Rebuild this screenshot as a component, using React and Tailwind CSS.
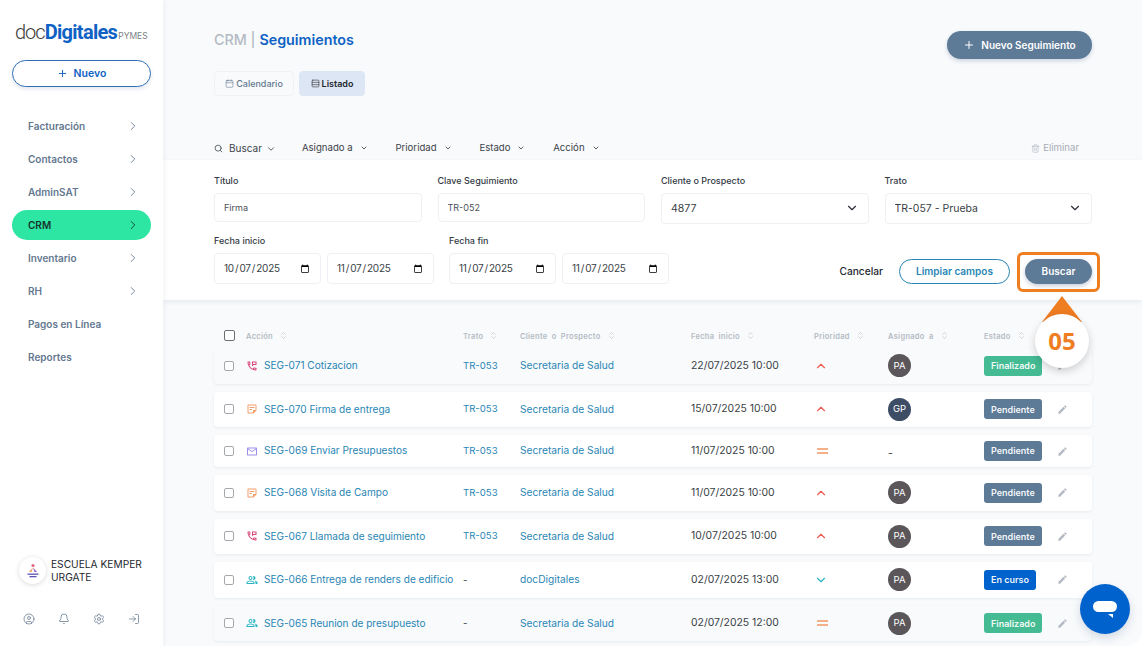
import { useState } from 'react'
import {
  Plus, ChevronRight, ChevronDown, ChevronUp, ChevronsUpDown, Search, Trash2, Calendar, Rows3,
  CircleUser, Bell, Settings, LogIn,
} from 'lucide-react'
import { MdOutlinePermPhoneMsg, MdOutlineStickyNote2, MdOutlineEmail, MdOutlinePeopleAlt, MdEdit } from 'react-icons/md'

const menu = [
  { label: 'Facturación', arrow: true },
  { label: 'Contactos', arrow: true },
  { label: 'AdminSAT', arrow: true },
  { label: 'CRM', arrow: true, active: true },
  { label: 'Inventario', arrow: true },
  { label: 'RH', arrow: true },
  { label: 'Pagos en Línea' },
  { label: 'Reportes' },
]

const filtros = ['Asignado a', 'Prioridad', 'Estado', 'Acción']

const filas = [
  { accion: 'SEG-071 Cotizacion', tipo: 'tel', trato: 'TR-053', cliente: 'Secretaria de Salud', fecha: '22/07/2025 10:00', prioridad: 'alta', persona: 'PA', estado: 'Finalizado', gris: true },
  { accion: 'SEG-070 Firma de entrega', tipo: 'nota', trato: 'TR-053', cliente: 'Secretaria de Salud', fecha: '15/07/2025 10:00', prioridad: 'alta', persona: 'GP', estado: 'Pendiente' },
  { accion: 'SEG-069 Enviar Presupuestos', tipo: 'mail', trato: 'TR-053', cliente: 'Secretaria de Salud', fecha: '11/07/2025 10:00', prioridad: 'media', persona: '-', estado: 'Pendiente' },
  { accion: 'SEG-068 Visita de Campo', tipo: 'nota', trato: 'TR-053', cliente: 'Secretaria de Salud', fecha: '11/07/2025 10:00', prioridad: 'alta', persona: 'PA', estado: 'Pendiente' },
  { accion: 'SEG-067 Llamada de seguimiento', tipo: 'tel', trato: 'TR-053', cliente: 'Secretaria de Salud', fecha: '10/07/2025 10:00', prioridad: 'alta', persona: 'PA', estado: 'Pendiente' },
  { accion: 'SEG-066 Entrega de renders de edificio', tipo: 'grupo', trato: '-', cliente: 'docDigitales', fecha: '02/07/2025 13:00', prioridad: 'baja', persona: 'PA', estado: 'En curso' },
  { accion: 'SEG-065 Reunion de presupuesto', tipo: 'grupo', trato: '-', cliente: 'Secretaria de Salud', fecha: '02/07/2025 12:00', prioridad: 'media', persona: 'PA', estado: 'Finalizado', gris: true },
]

const columnas = 'grid grid-cols-[22px_217px_57px_171px_123px_74px_96px_74px_1fr] items-center'

function IconoTipo({ tipo }) {
  if (tipo === 'tel') return <MdOutlinePermPhoneMsg className="text-[#d9467a]" size={12} />
  if (tipo === 'nota') return <MdOutlineStickyNote2 className="text-[#f2a06a]" size={12} />
  if (tipo === 'mail') return <MdOutlineEmail className="text-[#9d8de8]" size={13} />
  return <MdOutlinePeopleAlt className="text-[#2bb5c4]" size={12} />
}

function Prioridad({ nivel }) {
  if (nivel === 'alta') return <ChevronUp className="text-[#ec5a52]" size={14} strokeWidth={2} />
  if (nivel === 'baja') return <ChevronDown className="text-[#2bb5c4]" size={14} strokeWidth={2} />
  return (
    <div className="ml-[3px] flex w-[11px] flex-col gap-[2px]">
      <span className="h-[2px] bg-[#f4b088]" />
      <span className="h-[2px] bg-[#f4b088]" />
    </div>
  )
}

function Estado({ texto }) {
  const color = texto === 'Finalizado' ? 'bg-[#45bb94]' : texto === 'En curso' ? 'bg-[#0062cc]' : 'bg-[#5d7a97]'
  return (
    <span className={`flex h-[20px] w-fit items-center rounded-[3px] px-[7px] text-[9px] font-semibold text-white/95 ${color}`}>
      {texto}
    </span>
  )
}

function Encabezado({ texto }) {
  return (
    <div className="flex items-center gap-[6px] text-[7.5px] font-semibold tracking-[0.3px] text-[#b4bac3] [word-spacing:2px]">
      <span>{texto}</span>
      <ChevronsUpDown size={9} strokeWidth={1.5} className="-mt-[3px]" />
    </div>
  )
}

function Campo({ label, valor, ancho }) {
  return (
    <label className={`flex flex-col gap-[5px] ${ancho}`}>
      <span className="text-[9px] font-medium text-[#333a44] leading-[14px]">{label}</span>
      <input
        defaultValue={valor}
        className="h-[29px] w-full rounded-[4px] border border-[#eef0f3] bg-white px-[9px] text-[9px] text-[#4a5058] outline-none"
      />
    </label>
  )
}

function Opcion({ label, valor, ancho }) {
  return (
    <label className={`flex flex-col gap-[5px] ${ancho}`}>
      <span className="text-[9px] font-medium text-[#333a44] leading-[14px]">{label}</span>
      <div className="relative">
        <select
          defaultValue={valor}
          className="h-[31px] w-full appearance-none rounded-[4px] border border-[#eef0f3] bg-white px-[9px] text-[10.5px] text-[#3a3f46] outline-none"
        >
          <option>{valor}</option>
        </select>
        <ChevronDown size={14} strokeWidth={2} className="pointer-events-none absolute right-[10px] top-[8px] text-[#2b2f36]" />
      </div>
    </label>
  )
}

function CampoFecha({ valor }) {
  return (
    <input
      type="date"
      defaultValue={valor}
      className="h-[31px] w-[107px] rounded-[4px] border border-[#eef0f3] bg-white px-[8px] text-[10px] tracking-[-0.2px] text-[#3a3f46] outline-none"
    />
  )
}

function Sidebar() {
  return (
    <aside className="z-10 flex w-[163px] shrink-0 flex-col bg-white shadow-[1px_0_6px_rgba(30,50,80,0.06)]">
      <div className="mt-[20px] flex h-[24px] items-end pl-[15px] whitespace-nowrap">
        <span className="text-[20px] font-light leading-[24px] tracking-[-1px] text-[#3a3a3a] font-['Roboto',sans-serif]">doc</span>
        <span className="text-[20px] font-bold leading-[24px] tracking-[-0.7px] text-[#0f62c4] font-['Roboto',sans-serif]">Digitales</span>
        <span className="ml-[1px] mb-[2px] text-[8.5px] leading-[12px] text-[#7a7f86]">PYMES</span>
      </div>
      <button className="mx-[12px] mt-[16px] flex h-[27px] items-center justify-center gap-[6px] rounded-full border border-[#2f6fb5] bg-white text-[10.5px] font-semibold text-[#0f62c4] shadow-[0_2px_4px_rgba(30,60,110,0.12)]">
        <Plus size={11} strokeWidth={2} />
        Nuevo
      </button>
      <nav className="mt-[24px] flex flex-col gap-[3px] px-[12px]">
        {menu.map((m) => (
          <div
            key={m.label}
            className={`flex h-[30px] items-center justify-between rounded-full pl-[16px] pr-[11px] text-[10px] font-semibold ${
              m.active ? 'bg-[#2ee6a4] text-[#12342c]' : 'text-[#64788f]'
            }`}
          >
            <span>{m.label}</span>
            {m.arrow && <ChevronRight size={14} strokeWidth={1.5} />}
          </div>
        ))}
      </nav>
      <div className="mt-auto flex items-center gap-[5px] pl-[19px]">
        <div className="flex h-[27px] w-[27px] items-center justify-center rounded-full bg-white shadow-[0_1px_5px_rgba(0,0,0,0.15)]">
          <svg width="14" height="16" viewBox="0 0 14 16">
            <circle cx="7" cy="2.5" r="1.6" fill="#e5677e" />
            <path d="M7 4.5 L3 9 H5.5 Z" fill="#f29a4e" />
            <path d="M7 4.5 L11 9 H8.5 Z" fill="#8c5bd0" />
            <rect x="1.5" y="10.5" width="11" height="1.3" fill="#5a55b5" />
            <rect x="3.5" y="13" width="7" height="1.3" fill="#5a55b5" />
          </svg>
        </div>
        <div className="text-[10.2px] leading-[13px] text-[#24282e]">ESCUELA KEMPER<br />URGATE</div>
      </div>
      <div className="mb-[21px] mt-[29px] flex gap-[23px] pl-[23px] text-[#64788f]">
        <CircleUser size={12} strokeWidth={1.5} />
        <Bell size={12} strokeWidth={1.5} />
        <Settings size={12} strokeWidth={1.5} />
        <LogIn size={12} strokeWidth={1.5} />
      </div>
    </aside>
  )
}

export default function App() {
  const [vista, setVista] = useState('listado')

  return (
    <div className="flex h-[646px] w-[1142px] overflow-hidden bg-white font-['Inter',sans-serif]">
      <Sidebar />

      <main className="relative flex min-w-0 flex-1 flex-col rounded-br-[16px] bg-[#f8fafc]">
        <div className="flex items-start justify-between pl-[51px] pr-[50px] pt-[31px]">
          <h1 className="text-[14.3px] font-semibold leading-[18px]">
            <span className="font-medium text-[#b4bac3]">CRM | </span>
            <span className="text-[#0f62c4]">Seguimientos</span>
          </h1>
          <button className="flex h-[28px] w-[145px] items-center justify-center gap-[6px] rounded-full bg-[#5d7a97] text-[10px] font-semibold text-white shadow-[0_2px_4px_rgba(30,60,110,0.2)]">
            <Plus size={12} strokeWidth={2} />
            Nuevo Seguimiento
          </button>
        </div>

        <div className="-mt-[4px] flex gap-[5px] pl-[51px] pt-[16px]">
          <button
            onClick={() => setVista('calendario')}
            className={`flex h-[25px] w-[80px] items-center justify-center gap-[2px] rounded-[4px] border text-[9px] font-medium ${
              vista === 'calendario' ? 'border-[#dde6f4] bg-[#dde6f4] text-[#24282e]' : 'border-[#f0f2f5] text-[#64788f]'
            }`}
          >
            <Calendar size={9} strokeWidth={1.5} />
            Calendario
          </button>
          <button
            onClick={() => setVista('listado')}
            className={`flex h-[25px] w-[66px] items-center justify-center gap-[2px] rounded-[4px] border text-[9px] font-semibold ${
              vista === 'listado' ? 'border-[#dde6f4] bg-[#dde6f4] text-[#24282e]' : 'border-[#f0f2f5] text-[#64788f]'
            }`}
          >
            <Rows3 size={9} strokeWidth={1.5} />
            Listado
          </button>
        </div>

        <div className="mt-[40px] flex h-[24px] items-start pl-[51px] pr-[63px] pt-[5px] text-[9.6px] text-[#3c4249]">
          <div className="flex items-center">
            <Search size={9} strokeWidth={2} className="mr-[6px]" />
            <span className="mr-[4px] text-[10px]">Buscar</span>
            <ChevronDown size={10} strokeWidth={2} />
          </div>
          <div className="ml-[26px] flex gap-[27.8px]">
            {filtros.map((f) => (
              <div key={f} className="flex items-center gap-[7px]">
                <span>{f}</span>
                <ChevronDown size={8} strokeWidth={2.5} />
              </div>
            ))}
          </div>
          <div className="ml-auto flex items-center gap-[3px] text-[#a8adb5]">
            <Trash2 size={9} strokeWidth={1.5} />
            Eliminar
          </div>
        </div>

        <section className="flex h-[140px] flex-col bg-white pl-[51px] pr-[50px] pt-[14px] shadow-[0_2px_5px_rgba(30,50,80,0.08)]">
          <div className="flex gap-[16px]">
            <Campo label="Título" valor="Firma" ancho="w-[208px]" />
            <Campo label="Clave Seguimiento" valor="TR-052" ancho="w-[208px]" />
            <Opcion label="Cliente o Prospecto" valor="4877" ancho="w-[208px]" />
            <Opcion label="Trato" valor="TR-057 - Prueba" ancho="w-[208px]" />
          </div>
          <div className="mt-[10px] flex items-end">
            <div className="flex flex-col gap-[5px]">
              <span className="text-[9px] font-medium leading-[14px] text-[#333a44]">Fecha inicio</span>
              <div className="flex gap-[6px]">
                <CampoFecha valor="2025-10-07" />
                <CampoFecha valor="2025-11-07" />
              </div>
            </div>
            <div className="ml-[15px] flex flex-col gap-[5px]">
              <span className="text-[9px] font-medium leading-[14px] text-[#333a44]">Fecha fin</span>
              <div className="flex gap-[6px]">
                <CampoFecha valor="2025-11-07" />
                <CampoFecha valor="2025-11-07" />
              </div>
            </div>
            <div className="ml-auto flex items-center">
              <button className="text-[10.2px] font-medium text-[#24282e]">Cancelar</button>
              <button className="ml-[16px] h-[25px] w-[111px] rounded-full border border-[#2a86b4] text-[10px] font-semibold text-[#2a86b4]">
                Limpiar campos
              </button>
              <button className="ml-[15px] h-[25px] w-[67px] rounded-full bg-[#5d7a97] text-[10px] font-semibold text-white shadow-[0_2px_4px_rgba(30,60,110,0.25)]">
                Buscar
              </button>
            </div>
          </div>
        </section>

        <section className="flex flex-1 flex-col pl-[51px] pr-[50px] pt-[26px]">
          <div className={`${columnas} h-[22px] pl-[10px]`}>
            <input type="checkbox" className="-mt-[3px] h-[11px] w-[11px] appearance-none rounded-[2px] border border-[#6b7078] bg-white" />
            <Encabezado texto="Acción" />
            <Encabezado texto="Trato" />
            <Encabezado texto="Cliente o Prospecto" />
            <Encabezado texto="Fecha inicio" />
            <Encabezado texto="Prioridad" />
            <Encabezado texto="Asignado a" />
            <Encabezado texto="Estado" />
          </div>
          <div className="flex flex-col gap-[8px]">
            {filas.map((f) => (
              <div
                key={f.accion}
                className={`${columnas} ${f.persona === '-' ? 'h-[32px]' : 'h-[35.5px]'} rounded-[4px] pl-[10px] shadow-[0_1px_3px_rgba(30,50,80,0.07)] ${f.gris ? 'bg-[#f8fafc]' : 'bg-white'}`}
              >
                <input type="checkbox" className="h-[10px] w-[10px] appearance-none rounded-[2px] border border-[#a5a8ad] bg-white" />
                <div className="flex items-center gap-[6px] whitespace-nowrap text-[10.05px] text-[#2a86b4]">
                  <span className="flex w-[12px] justify-center"><IconoTipo tipo={f.tipo} /></span>
                  {f.accion}
                </div>
                <div className={`text-[9.6px] ${f.trato === '-' ? 'text-[#3a3f46]' : 'text-[#2a86b4]'}`}>{f.trato}</div>
                <div className="text-[10.2px] text-[#2a86b4]">{f.cliente}</div>
                <div className="text-[10.4px] text-[#3a3f46]">{f.fecha}</div>
                <div><Prioridad nivel={f.prioridad} /></div>
                <div>
                  {f.persona === '-' ? (
                    <span className="text-[10.5px] text-[#3a3f46]">-</span>
                  ) : (
                    <span className={`flex h-[23px] w-[23px] items-center justify-center rounded-full text-[9.5px] text-white ${f.persona === 'GP' ? 'bg-[#3d4d66]' : 'bg-[#5a565a]'}`}>
                      {f.persona}
                    </span>
                  )}
                </div>
                <div><Estado texto={f.estado} /></div>
                <MdEdit size={11} className="-ml-[1px] text-[#b4bac3]" />
              </div>
            ))}
          </div>
        </section>

        {/* Marca del tutorial sobre el botón Buscar */}
        <div className="pointer-events-none absolute left-[854px] top-[252px] z-10 h-[40px] w-[83px] rounded-[6px] border-[3px] border-[#ef7d22]" />
        <svg className="pointer-events-none absolute left-[877px] top-[296px] z-10" width="44" height="28" viewBox="0 0 44 28">
          <path d="M22 0 L42 26 H2 Z" fill="#ef7d22" />
        </svg>
        <div className="absolute left-[872px] top-[314px] z-10 flex h-[54px] w-[54px] items-center justify-center rounded-full bg-white text-[24px] font-bold text-[#ef7d22] shadow-[0_3px_8px_rgba(0,0,0,0.18)] font-['Open_Sans',sans-serif]">
          05
        </div>

        {/* Chat */}
        <button className="absolute left-[917px] top-[584px] z-10 flex h-[50px] w-[50px] items-center justify-center rounded-full bg-[#0062cc] shadow-[0_4px_10px_rgba(0,40,90,0.15)]">
          <svg width="24" height="20" viewBox="0 0 24 20">
            <rect x="0" y="2" width="24" height="11" rx="5.5" fill="white" />
            <path d="M15 15 H20 L20 19 Z" fill="white" />
          </svg>
        </button>
      </main>
    </div>
  )
}
